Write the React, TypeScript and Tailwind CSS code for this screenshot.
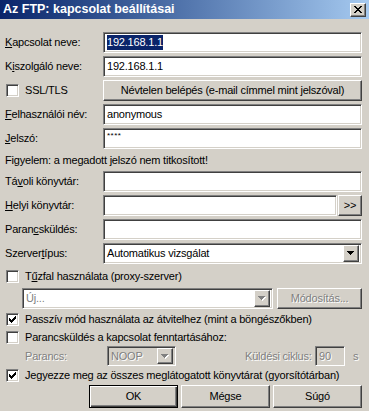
const sunken =
  "border border-t-[#808080] border-l-[#808080] border-b-white border-r-white shadow-[inset_1px_1px_0_#404040,inset_-1px_-1px_0_#d4d0c8]";
const raised =
  "border border-t-white border-l-white border-b-[#404040] border-r-[#404040] shadow-[inset_-1px_-1px_0_#808080] bg-[#d4d0c8]";
const grayText = "text-[#808080] [text-shadow:1px_1px_0_#ffffff]";

function Check({ checked }: { checked?: boolean }) {
  const tops = [2, 3, 4, 3, 2, 1, 0];
  return (
    <div className={`w-[13px] h-[13px] bg-white shrink-0 flex items-center justify-center ${sunken}`}>
      {checked && (
        <svg width="7" height="7" viewBox="0 0 7 7" shapeRendering="crispEdges">
          {tops.map((t, i) => (
            <rect key={i} x={i} y={t} width="1" height="3" fill="#000" />
          ))}
        </svg>
      )}
    </div>
  );
}

function Arrow({ disabled }: { disabled?: boolean }) {
  const rows = [
    [0, 7],
    [1, 5],
    [2, 3],
    [3, 1],
  ];
  return (
    <svg width="8" height="5" viewBox="0 0 8 5" shapeRendering="crispEdges">
      {disabled &&
        rows.map(([x, w], i) => <rect key={"s" + i} x={x + 1} y={i + 1} width={w} height="1" fill="#fff" />)}
      {rows.map(([x, w], i) => (
        <rect key={i} x={x} y={i} width={w} height="1" fill={disabled ? "#808080" : "#000"} />
      ))}
    </svg>
  );
}

function DropButton({ disabled }: { disabled?: boolean }) {
  return (
    <div className={`w-[16px] h-full shrink-0 flex items-center justify-center ${raised}`}>
      <Arrow disabled={disabled} />
    </div>
  );
}

function CloseButton() {
  const rows = [
    [0, 2, 6, 2],
    [1, 2, 5, 2],
    [2, 4],
    [3, 2],
    [2, 4],
    [1, 2, 5, 2],
    [0, 2, 6, 2],
  ];
  return (
    <div className={`w-[16px] h-[14px] flex items-center justify-center ${raised}`}>
      <svg width="8" height="7" viewBox="0 0 8 7" shapeRendering="crispEdges">
        {rows.map((r, y) => (
          <g key={y}>
            <rect x={r[0]} y={y} width={r[1]} height="1" fill="#000" />
            {r.length > 2 && <rect x={r[2]} y={y} width={r[3]} height="1" fill="#000" />}
          </g>
        ))}
      </svg>
    </div>
  );
}

function Row({ label, children, className = "" }: { label: React.ReactNode; children: React.ReactNode; className?: string }) {
  return (
    <div className={`flex items-center h-[21px] ${className}`}>
      <div className="w-[98px] shrink-0">{label}</div>
      <div className="flex-1 flex h-full">{children}</div>
    </div>
  );
}

function Input({ children }: { children?: React.ReactNode }) {
  return <div className={`flex-1 h-full bg-white flex items-center px-[3px] ${sunken}`}>{children}</div>;
}

function CheckRow({ checked, children, className = "" }: { checked?: boolean; children: React.ReactNode; className?: string }) {
  return (
    <div className={`flex items-center h-[16px] pl-[1px] ${className}`}>
      <Check checked={checked} />
      <span className="ml-[6px]">{children}</span>
    </div>
  );
}

export default function App() {
  return (
    <div className="w-[369px] h-[411px] bg-[#d4d0c8] overflow-hidden font-['Liberation_Sans',Arial,sans-serif] text-[11px] tracking-[-0.2px] text-black leading-none">
      {/* title bar */}
      <div className="h-[19px] flex items-center justify-between pl-[3px] pr-[3px] bg-gradient-to-r from-[#0a246a] to-[#a6caf0]">
        <span className="text-white font-bold text-[12.5px] tracking-normal">Az FTP: kapcsolat beállításai</span>
        <CloseButton />
      </div>

      <div className="flex flex-col pl-[5px] pr-[7px] pt-[13px]">
        <Row label={<><span className="underline">K</span>apcsolat neve:</>}>
          <Input>
            <span className="bg-[#0a246a] text-white py-[2px]">192.168.1.1</span>
          </Input>
        </Row>
        <Row className="mt-[3px]" label={<>K<span className="underline">i</span>szolgáló neve:</>}>
          <Input>192.168.1.1</Input>
        </Row>
        <div className="flex items-center h-[21px] mt-[3px]">
          <div className="w-[98px] shrink-0 flex items-center pl-[1px]">
            <Check />
            <span className="ml-[6px]">SSL/TLS</span>
          </div>
          <div className={`flex-1 h-full flex items-center justify-center ${raised}`}>
            Névtelen belépés (e-mail címmel mint jelszóval)
          </div>
        </div>
        <Row className="mt-[3px]" label={<><span className="underline">F</span>elhasználói név:</>}>
          <Input>anonymous</Input>
        </Row>
        <Row className="mt-[3px]" label={<><span className="underline">J</span>elszó:</>}>
          <Input>
            <span className="text-[8px] tracking-[0.5px] -mt-[5px]">****</span>
          </Input>
        </Row>
        <div className="h-[22px] flex items-center">Figyelem: a megadott jelszó nem titkosított!</div>
        <Row label={<>Tá<span className="underline">v</span>oli könyvtár:</>}>
          <Input />
        </Row>
        <Row className="mt-[3px]" label={<><span className="underline">H</span>elyi könyvtár:</>}>
          <Input />
          <div className={`w-[24px] ml-[1px] h-full flex items-center justify-center ${raised}`}>&gt;&gt;</div>
        </Row>
        <Row className="mt-[3px]" label={<>Paran<span className="underline">c</span>sküldés:</>}>
          <Input />
        </Row>
        <Row className="mt-[3px]" label={<>Szerver<span className="underline">t</span>ípus:</>}>
          <div className={`flex-1 h-full bg-white flex items-center pl-[3px] pr-[2px] ${sunken}`}>
            <span className="flex-1">Automatikus vizsgálat</span>
            <div className="h-[17px] flex">
              <DropButton />
            </div>
          </div>
        </Row>

        <CheckRow className="mt-[4px]">
          T<span className="underline">ű</span>zfal használata (proxy-szerver)
        </CheckRow>
        <div className="flex items-center h-[21px] mt-[4px]">
          <div className={`ml-[17px] w-[251px] h-full bg-white flex items-center pl-[3px] pr-[2px] ${sunken}`}>
            <span className={`flex-1 ${grayText}`}>Új...</span>
            <div className="h-[17px] flex">
              <DropButton disabled />
            </div>
          </div>
          <div className={`ml-[4px] flex-1 h-full flex items-center justify-center ${raised}`}>
            <span className={grayText}>Módosítás...</span>
          </div>
        </div>
        <CheckRow checked className="mt-[2px]">
          Passzív mód használata az átvitelhez (mint a böngészőkben)
        </CheckRow>
        <CheckRow className="mt-[2px]">Parancsküldés a kapcsolat fenntartásához:</CheckRow>
        <div className="flex items-center h-[20px] mt-[1px] pl-[20px]">
          <span className={`w-[82px] shrink-0 ${grayText}`}>Parancs:</span>
          <div className={`w-[69px] h-full bg-[#d4d0c8] flex items-center pl-[3px] pr-[2px] ${sunken}`}>
            <span className={`flex-1 ${grayText}`}>NOOP</span>
            <div className="h-[16px] flex">
              <DropButton disabled />
            </div>
          </div>
          <span className="w-[69px] shrink-0" />
          <span className={`w-[70px] shrink-0 ${grayText}`}>Küldési ciklus:</span>
          <div className={`w-[30px] h-full bg-[#d4d0c8] flex items-center px-[3px] ${sunken}`}>
            <span className={grayText}>90</span>
          </div>
          <span className={`ml-[8px] ${grayText}`}>s</span>
        </div>
        <CheckRow checked className="mt-[1px]">
          Jegyezze meg az összes meglátogatott könyvtárat (gyorsítótárban)
        </CheckRow>
        <div className="flex justify-end gap-[3px] mt-[2px]">
          <div className="w-[89px] h-[23px] flex items-center justify-center bg-[#d4d0c8] border border-black shadow-[inset_1px_1px_0_#ffffff,inset_-1px_-1px_0_#404040,inset_-2px_-2px_0_#808080]">
            OK
          </div>
          <div className={`w-[89px] h-[23px] flex items-center justify-center ${raised}`}>Mégse</div>
          <div className={`w-[89px] h-[23px] flex items-center justify-center ${raised}`}>Súgó</div>
        </div>
      </div>
    </div>
  );
}
